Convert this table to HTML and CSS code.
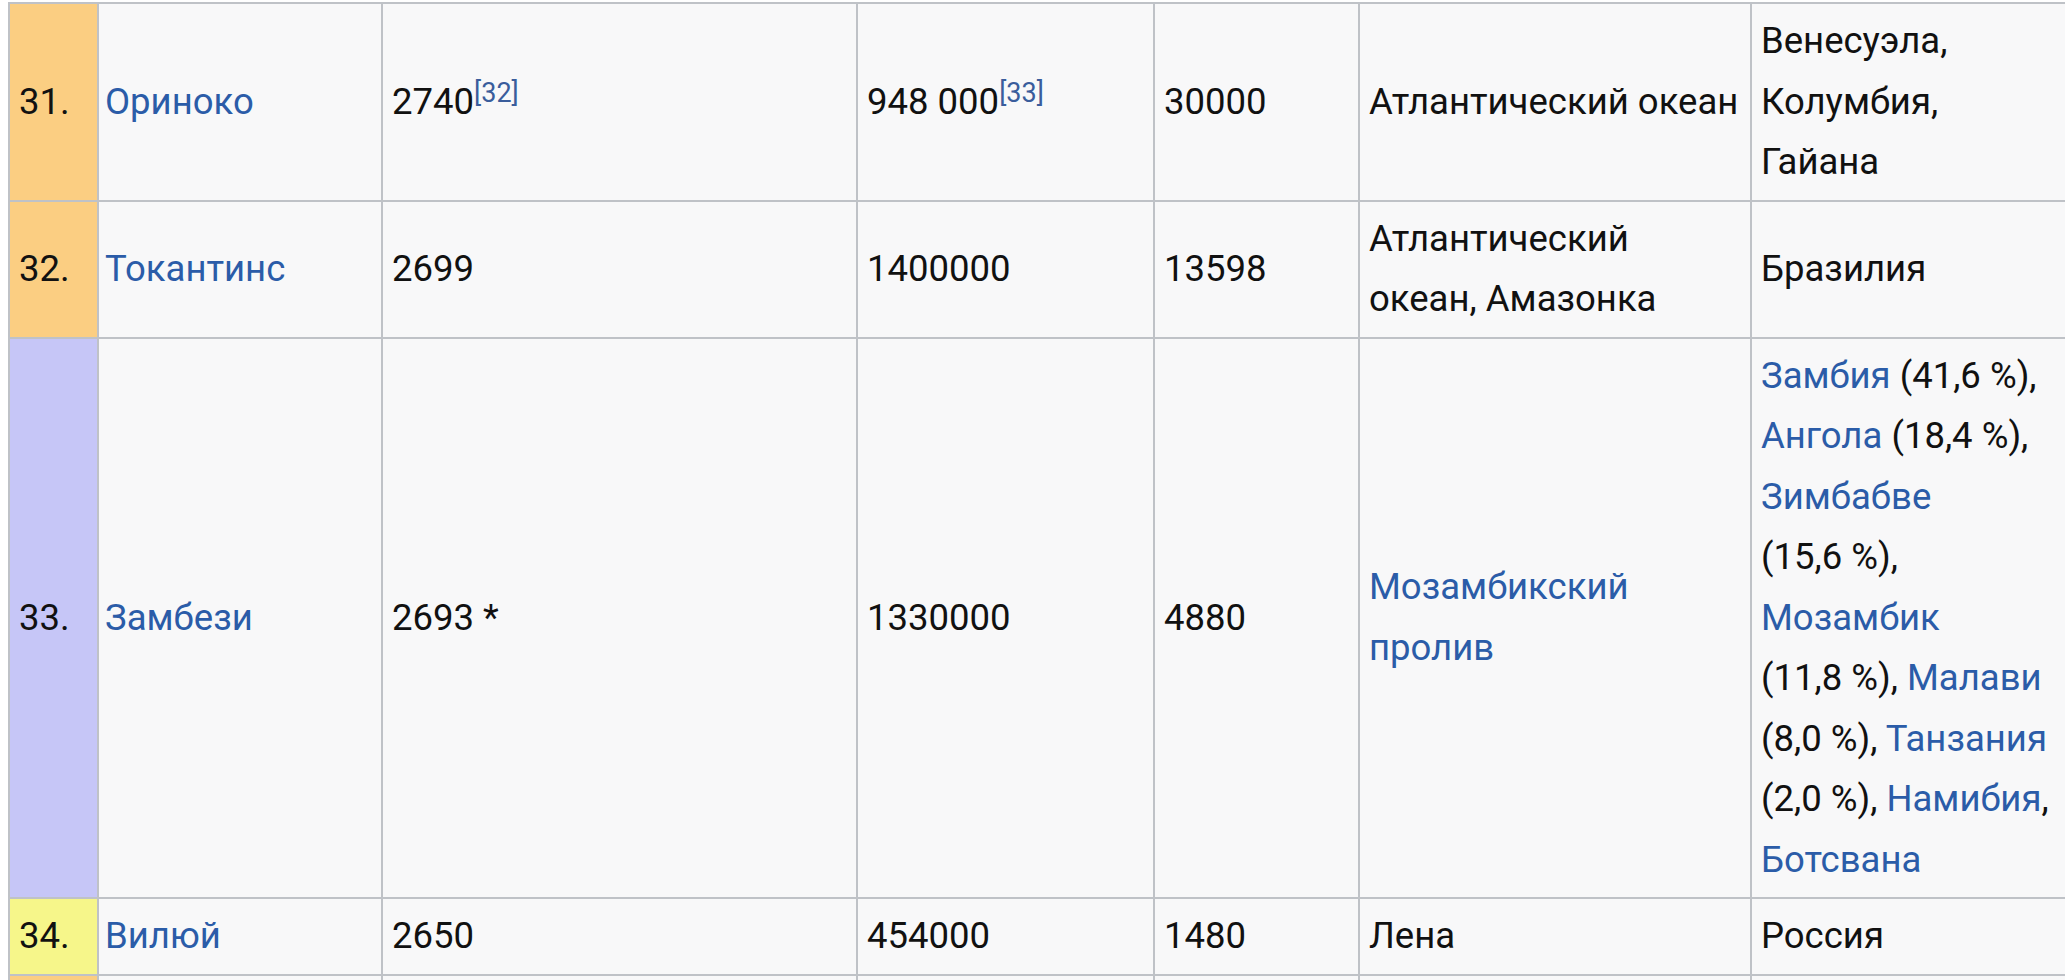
FILE: index.html
```html
<!DOCTYPE html>
<html lang="ru">
<head>
<meta charset="utf-8">
<title>Список рек</title>
<link rel="stylesheet" href="styles.css">
</head>
<body>
<table class="wikitable">
  <colgroup>
    <col class="c-num">
    <col class="c-name">
    <col class="c-len">
    <col class="c-area">
    <col class="c-flow">
    <col class="c-mouth">
    <col class="c-country">
  </colgroup>
  <tbody>
    <tr>
      <td class="num sa">31.</td>
      <td class="name"><a href="#">Ориноко</a></td>
      <td>2740<sup class="ref"><a href="#">[32]</a></sup></td>
      <td>948 000<sup class="ref"><a href="#">[33]</a></sup></td>
      <td>30000</td>
      <td>Атлантический океан</td>
      <td>Венесуэла, Колумбия, Гайана</td>
    </tr>
    <tr>
      <td class="num sa">32.</td>
      <td class="name"><a href="#">Токантинс</a></td>
      <td>2699</td>
      <td>1400000</td>
      <td>13598</td>
      <td>Атлантический океан, Амазонка</td>
      <td>Бразилия</td>
    </tr>
    <tr>
      <td class="num af">33.</td>
      <td class="name"><a href="#">Замбези</a></td>
      <td>2693 *</td>
      <td>1330000</td>
      <td>4880</td>
      <td><a href="#">Мозамбикский пролив</a></td>
      <td><a href="#">Замбия</a> (41,6&nbsp;%), <a href="#">Ангола</a> (18,4&nbsp;%), <a href="#">Зимбабве</a> (15,6&nbsp;%), <a href="#">Мозамбик</a> (11,8&nbsp;%), <a href="#">Малави</a> (8,0&nbsp;%), <a href="#">Танзания</a> (2,0&nbsp;%), <a href="#">Намибия</a>, <a href="#">Ботсвана</a></td>
    </tr>
    <tr>
      <td class="num as">34.</td>
      <td class="name"><a href="#">Вилюй</a></td>
      <td>2650</td>
      <td>454000</td>
      <td>1480</td>
      <td>Лена</td>
      <td>Россия</td>
    </tr>
    <tr class="next">
      <td class="num sa"></td>
      <td class="name"></td>
      <td></td>
      <td></td>
      <td></td>
      <td></td>
      <td></td>
    </tr>
  </tbody>
</table>
</body>
</html>
```

FILE: styles.css
```css
html {
  overflow: hidden;
  background: #ffffff;
}

body {
  margin: 0;
  padding: 2px 0 0 8px;
  font-family: Roboto, "Noto Sans", "Liberation Sans", sans-serif;
  font-size: 36.5px;
  line-height: 60.5px;
  color: #111111;
}

.wikitable {
  border-collapse: collapse;
  table-layout: fixed;
  width: 2065px;
  background: #f8f8f9;
}

.c-num { width: 89px; }
.c-name { width: 284px; }
.c-len { width: 475px; }
.c-area { width: 297px; }
.c-flow { width: 205px; }
.c-mouth { width: 392px; }
.c-country { width: 323px; }

.wikitable td {
  border: 2px solid #bfc2c7;
  padding: 7px 8px 7px 9px;
  vertical-align: middle;
  text-align: left;
}

.wikitable td.name {
  padding-left: 6px;
}

.wikitable a {
  color: #2b5ca8;
  text-decoration: none;
}

.sa { background: #fbce82; }
.af { background: #c6c6f7; }
.as { background: #f6f68a; }

.next td {
  height: 60px;
}

.ref {
  font-size: 27px;
  line-height: 0;
  vertical-align: 12px;
}

.ref a {
  color: #3a5d9c;
}
```
